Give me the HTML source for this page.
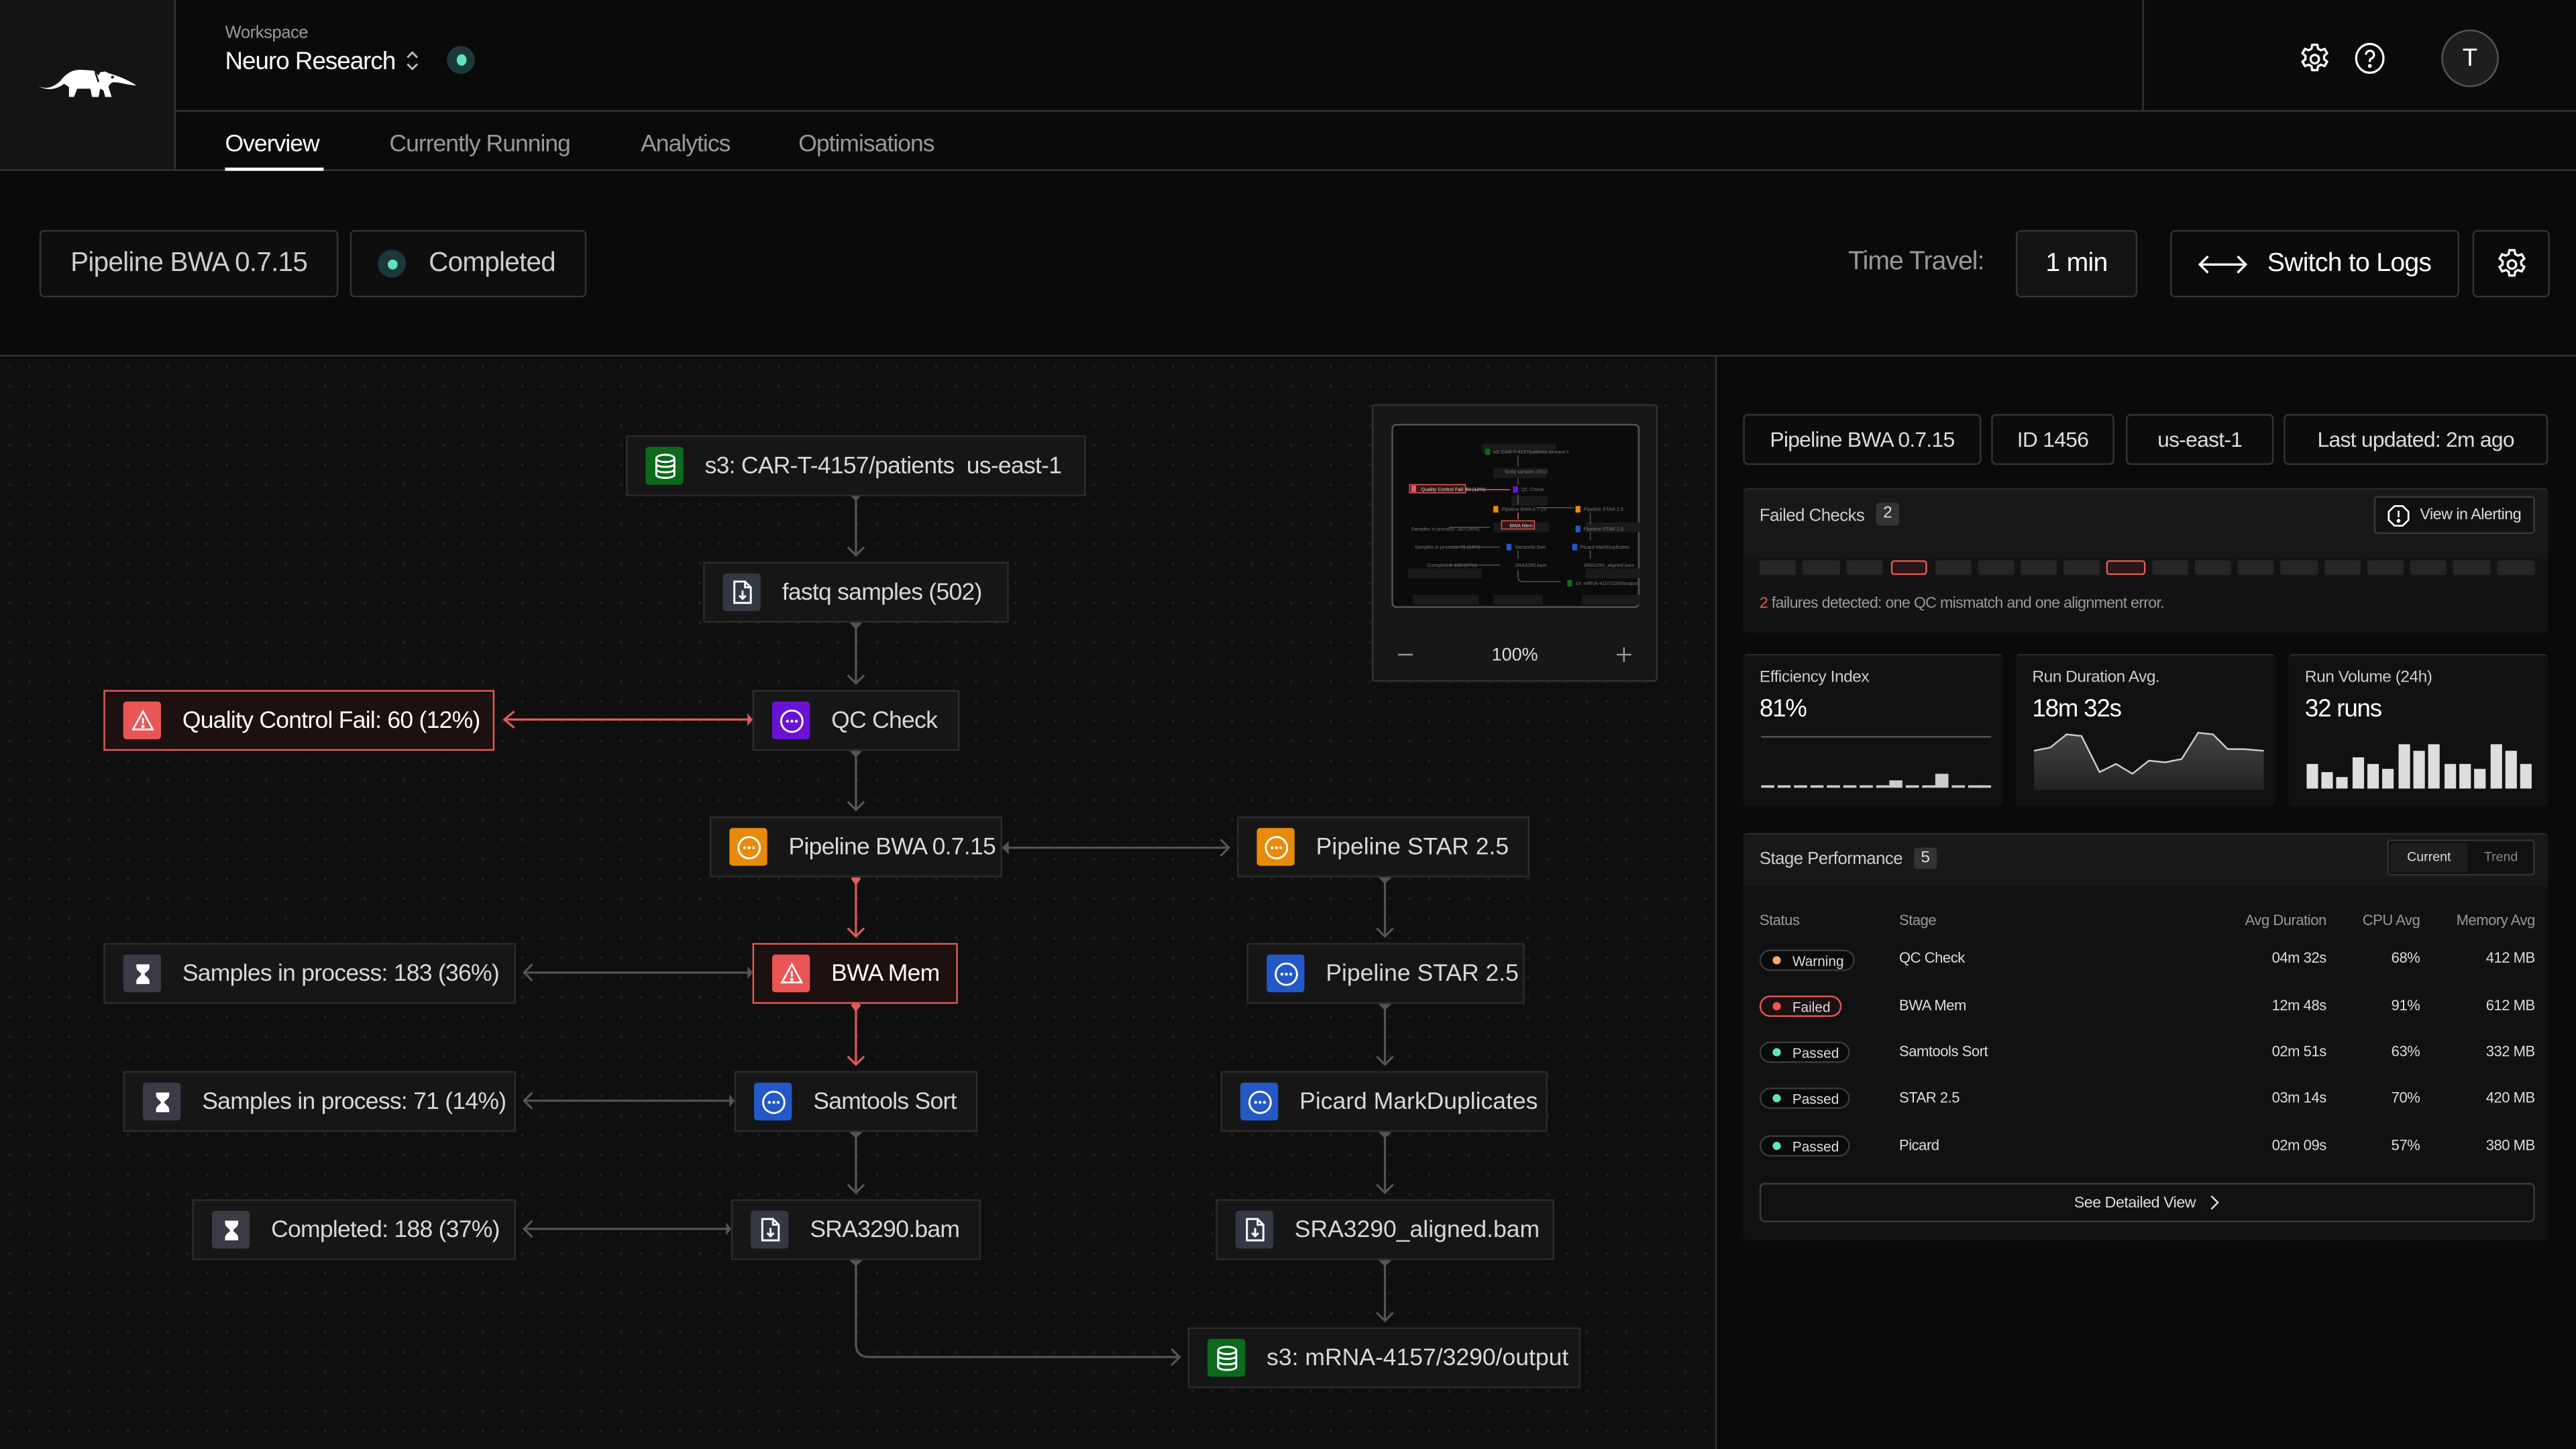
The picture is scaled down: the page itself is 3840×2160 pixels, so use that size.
<!DOCTYPE html>
<html><head><meta charset="utf-8">
<style>
*{box-sizing:border-box;margin:0;padding:0}
html,body{width:3840px;height:2160px;overflow:hidden;background:#0a0a0a}
#r{position:absolute;left:0;top:0;width:1568px;height:882px;transform:scale(2.44898);transform-origin:0 0;font-family:"Liberation Sans",Arial,sans-serif;color:#ddd;background:#0a0a0a}
.a{position:absolute}
.node{position:absolute;height:37px;background:#161616;border:1px solid #2c2c2c;display:flex;align-items:center;padding-left:11px;font-size:14.5px;color:#d8d8d8;white-space:nowrap;letter-spacing:-0.3px}
.node .ic{width:23px;height:23px;border-radius:2px;margin-right:13px;display:flex;align-items:center;justify-content:center;flex:none}
.red{border-color:#e05a5a;background:#1c1010;color:#fff}
.chip{position:absolute;border:1px solid #333;border-radius:3px;background:#111;display:flex;align-items:center;justify-content:center;font-size:13px;color:#ddd;letter-spacing:-0.3px}
.card{position:absolute;background:#111;border-radius:3px;border-top:1px solid #2a2a2a}
.t9{font-size:9px;color:#aaa}
.pill{position:absolute;left:1071px;height:13px;border:1px solid #3a3a3a;border-radius:7px;font-size:8.5px;color:#ddd;display:flex;align-items:center;padding:0 6px 0 7px;background:#0a0a0a}
.pill i{width:5px;height:5px;border-radius:50%;display:inline-block;margin-right:7px}
.row{position:absolute;font-size:9px;color:#ddd;letter-spacing:-0.2px}
</style></head><body><div id="r">

<!-- top header -->
<div class="a" style="left:0;top:0;width:107px;height:104px;background:#141414;border-right:1px solid #333"></div>
<svg class="a" style="left:23px;top:42px" width="60" height="17" viewBox="0 0 60 17"><path fill="#fff" d="M0,10 C5,13 10,11 14,7 C17,3 21,0 27,0.5 L34,1 C35,2 36,3 37,4 L38,2 L41,1.5 L43,2.5 C48,4 54,6 60,10 C56,10 50,8 46,8 L44,9 L43,11 L45,17 L41,17 L40,13 L38,12 L37,17 L33,17 L32,12 L24,12 L22,17 L19,17 L19,11 L16,9 C12,12 6,14 0,10 Z"/><path d="M35,2 L37,8" stroke="#141414" stroke-width="1"/><circle cx="45.5" cy="5" r="0.9" fill="#141414"/></svg>
<div class="a" style="left:107px;top:67px;width:1461px;height:1px;background:#333"></div>
<div class="a" style="left:1304px;top:0;width:1px;height:67px;background:#333"></div>
<div class="a" style="left:0;top:103px;width:1568px;height:1px;background:#333"></div>
<div class="a" style="left:137px;top:14px;font-size:10.5px;color:#999;letter-spacing:-0.2px">Workspace</div>
<div class="a" style="left:137px;top:29px;font-size:15px;color:#fff;letter-spacing:-0.4px">Neuro Research</div>
<svg class="a" style="left:246px;top:30px" width="10" height="14" viewBox="0 0 10 14"><path d="M2,5 L5,2 L8,5 M2,9 L5,12 L8,9" stroke="#bbb" fill="none" stroke-width="1.2"/></svg>
<div class="a" style="left:272px;top:28px;width:17px;height:17px;border-radius:50%;background:#1d3838"></div>
<div class="a" style="left:278px;top:33px;width:6px;height:7px;border-radius:50%;background:#5fe3c4"></div>
<div class="a" style="left:137px;top:80px;font-size:14.5px;color:#fff;letter-spacing:-0.4px">Overview</div>
<div class="a" style="left:137px;top:102px;width:60px;height:2px;background:#fff"></div>
<div class="a" style="left:237px;top:80px;font-size:14.5px;color:#999;letter-spacing:-0.4px">Currently Running</div>
<div class="a" style="left:390px;top:80px;font-size:14.5px;color:#999;letter-spacing:-0.4px">Analytics</div>
<div class="a" style="left:486px;top:80px;font-size:14.5px;color:#999;letter-spacing:-0.4px">Optimisations</div>
<svg class="a" style="left:1398px;top:25px" width="22" height="22" viewBox="0 0 24 24" fill="none" stroke="#fff" stroke-width="1.5"><path d="M10.3 2.5h3.4l.5 2.6 1.8 1 2.5-.9 1.7 2.9-2 1.7v2.2l2 1.7-1.7 2.9-2.5-.9-1.8 1-.5 2.6h-3.4l-.5-2.6-1.8-1-2.5.9-1.7-2.9 2-1.7v-2.2l-2-1.7 1.7-2.9 2.5.9 1.8-1z"/><circle cx="12" cy="12" r="2.8"/></svg>
<svg class="a" style="left:1432px;top:25px" width="21" height="21" viewBox="0 0 24 24" fill="none" stroke="#fff" stroke-width="1.5"><ellipse cx="12" cy="12" rx="9.5" ry="10"/><path d="M9.3 9.5a2.8 2.8 0 1 1 3.8 2.6c-.8.4-1.1.9-1.1 1.8v.6"/><circle cx="12" cy="17.3" r=".6" fill="#fff"/></svg>
<div class="a" style="left:1486px;top:18px;width:35px;height:35px;border-radius:50%;background:#1e1e1e;border:1.5px solid #555;display:flex;align-items:center;justify-content:center;font-size:15px;color:#fff">T</div>

<!-- toolbar -->
<div class="a" style="left:0;top:216px;width:1568px;height:1px;background:#333"></div>
<div class="chip" style="left:24px;top:140px;width:182px;height:41px;font-size:16.5px;color:#ccc;background:#0e0e0e">Pipeline BWA 0.7.15</div>
<div class="chip" style="left:213px;top:140px;width:144px;height:41px;font-size:16.5px;color:#ccc;background:#0e0e0e;justify-content:flex-start;padding-left:16px"><span style="width:17px;height:17px;border-radius:50%;background:#1d3838;display:inline-flex;align-items:center;justify-content:center;margin-right:14px"><span style="width:6px;height:6px;border-radius:50%;background:#5fe3c4"></span></span>Completed</div>
<div class="a" style="left:1125px;top:151px;font-size:16px;color:#999;letter-spacing:-0.4px">Time Travel:</div>
<div class="chip" style="left:1227px;top:140px;width:74px;height:41px;font-size:16px;color:#fff;background:#141414">1 min</div>
<div class="chip" style="left:1321px;top:140px;width:176px;height:41px;font-size:16px;color:#fff;background:#0a0a0a"><svg width="30" height="14" viewBox="0 0 30 14" style="margin-right:12px" fill="none" stroke="#fff" stroke-width="1.4"><path d="M1,7 H29 M6,2 L1,7 L6,12 M24,2 L29,7 L24,12"/></svg>Switch to Logs</div>
<div class="chip" style="left:1505px;top:140px;width:47px;height:41px;background:#0a0a0a"><svg width="22" height="22" viewBox="0 0 24 24" fill="none" stroke="#fff" stroke-width="1.5"><path d="M10.3 2.5h3.4l.5 2.6 1.8 1 2.5-.9 1.7 2.9-2 1.7v2.2l2 1.7-1.7 2.9-2.5-.9-1.8 1-.5 2.6h-3.4l-.5-2.6-1.8-1-2.5.9-1.7-2.9 2-1.7v-2.2l-2-1.7 1.7-2.9 2.5.9 1.8-1z"/><circle cx="12" cy="12" r="2.8"/></svg></div>

<!-- canvas -->
<div class="a" style="left:0;top:217px;width:1045px;height:665px;background-color:#0f0f0f;background-image:radial-gradient(circle,#1e1e1e 0.8px,transparent 1.1px);background-size:12px 12px;border-right:1px solid #333"></div>

<svg class="a" style="left:0;top:0" width="1045" height="882" fill="none" stroke-width="1.3">
<g stroke="#555">
<path d="M521,301 V338 M516,333 L521,338 L526,333"/>
<path d="M521,379 V416 M516,411 L521,416 L526,411"/>
<path d="M521,457 V493 M516,488 L521,493 L526,488"/>
<path d="M610,516 H748 M743,511 L748,516 L743,521"/>
<path d="M843,534 V570 M838,565 L843,570 L848,565"/>
<path d="M843,611 V648 M838,643 L843,648 L848,643"/>
<path d="M843,689 V726 M838,721 L843,726 L848,721"/>
<path d="M843,767 V804 M838,799 L843,804 L848,799"/>
<path d="M521,689 V726 M516,721 L521,726 L526,721"/>
<path d="M458,592 H319 M324,587 L319,592 L324,597"/>
<path d="M447,670 H319 M324,665 L319,670 L324,675"/>
<path d="M445,748 H319 M324,743 L319,748 L324,753"/>
<path d="M521,767 V818 Q521,826 529,826 H718 M713,821 L718,826 L713,831"/>
</g>
<g stroke="#e05a5a">
<path d="M458,438 H307 M313,433 L307,438 L313,443"/>
<path d="M521,534 V570 M516,565 L521,570 L526,565"/>
<path d="M521,611 V648 M516,643 L521,648 L526,643"/>
</g>
<g fill="#e05a5a"><path d="M521,531 l3,4 -3,4 -3,-4z"/><path d="M521,608 l3,4 -3,4 -3,-4z"/><path d="M458,438 l-3,-4 v8z"/></g>
<g fill="#555"><path d="M517,301 h8 l-4,4z"/><path d="M517,379 h8 l-4,4z"/><path d="M517,457 h8 l-4,4z"/><path d="M839,534 h8 l-4,4z"/><path d="M839,611 h8 l-4,4z"/><path d="M839,689 h8 l-4,4z"/><path d="M839,767 h8 l-4,4z"/><path d="M517,689 h8 l-4,4z"/><path d="M517,767 h8 l-4,4z"/><path d="M610,516 l4,-4 v8z"/><path d="M458,592 l-3,-4 v8z"/><path d="M447,670 l-3,-4 v8z"/><path d="M445,748 l-3,-4 v8z"/></g>
</svg>

<!-- icon defs via inline -->
<div class="node" style="left:381px;top:265px;width:280px"><span class="ic" style="background:#0b6a1c"><svg width="14" height="16" viewBox="0 0 14 16" fill="none" stroke="#fff" stroke-width="1.2"><ellipse cx="7" cy="3" rx="5.5" ry="2.2"/><path d="M1.5,3 V13 C1.5,15.5 12.5,15.5 12.5,13 V3 M1.5,6.3 C1.5,8.8 12.5,8.8 12.5,6.3 M1.5,9.6 C1.5,12.1 12.5,12.1 12.5,9.6"/></svg></span>s3: CAR-T-4157/patients&nbsp; us-east-1</div>
<div class="node" style="left:428px;top:342px;width:186px"><span class="ic" style="background:#333842"><svg width="12" height="15" viewBox="0 0 12 15" fill="none" stroke="#fff" stroke-width="1.2"><path d="M1,1 H7.5 L11,4.5 V14 H1Z M7.5,1 V4.5 H11 M6,6.5 V11.5 M4,9.5 L6,11.5 L8,9.5"/></svg></span>fastq samples (502)</div>
<div class="node" style="left:458px;top:420px;width:126px"><span class="ic" style="background:#6a12d4"><svg width="16" height="16" viewBox="0 0 16 16" fill="none" stroke="#fff" stroke-width="1.2"><circle cx="8" cy="8" r="6.5"/><g fill="#fff" stroke="none"><circle cx="5.3" cy="8" r=".9"/><circle cx="8" cy="8" r=".9"/><circle cx="10.7" cy="8" r=".9"/></g></svg></span>QC Check</div>
<div class="node red" style="left:63px;top:420px;width:238px"><span class="ic" style="background:#ea5656"><svg width="14" height="13" viewBox="0 0 14 13" fill="none" stroke="#fff" stroke-width="1.1"><path d="M7,1 L13,12 H1Z M7,5 V8.5"/><circle cx="7" cy="10.2" r=".5" fill="#fff"/></svg></span>Quality Control Fail: 60 (12%)</div>
<div class="node" style="left:432px;top:497px;width:178px"><span class="ic" style="background:#e88a0a"><svg width="16" height="16" viewBox="0 0 16 16" fill="none" stroke="#fff" stroke-width="1.2"><circle cx="8" cy="8" r="6.5"/><g fill="#fff" stroke="none"><circle cx="5.3" cy="8" r=".9"/><circle cx="8" cy="8" r=".9"/><circle cx="10.7" cy="8" r=".9"/></g></svg></span>Pipeline BWA 0.7.15</div>
<div class="node" style="left:753px;top:497px;width:178px;letter-spacing:0"><span class="ic" style="background:#e88a0a"><svg width="16" height="16" viewBox="0 0 16 16" fill="none" stroke="#fff" stroke-width="1.2"><circle cx="8" cy="8" r="6.5"/><g fill="#fff" stroke="none"><circle cx="5.3" cy="8" r=".9"/><circle cx="8" cy="8" r=".9"/><circle cx="10.7" cy="8" r=".9"/></g></svg></span>Pipeline STAR 2.5</div>
<div class="node" style="left:63px;top:574px;width:251px"><span class="ic" style="background:#3a3b44"><svg width="10" height="14" viewBox="0 0 10 14" fill="#fff"><path d="M1,1 H9 V2.5 C9,5 6,6 6,7 C6,8 9,9 9,11.5 V13 H1 V11.5 C1,9 4,8 4,7 C4,6 1,5 1,2.5Z"/></svg></span>Samples in process: 183 (36%)</div>
<div class="node red" style="left:458px;top:574px;width:125px"><span class="ic" style="background:#ea5656"><svg width="14" height="13" viewBox="0 0 14 13" fill="none" stroke="#fff" stroke-width="1.1"><path d="M7,1 L13,12 H1Z M7,5 V8.5"/><circle cx="7" cy="10.2" r=".5" fill="#fff"/></svg></span>BWA Mem</div>
<div class="node" style="left:759px;top:574px;width:169px;letter-spacing:0"><span class="ic" style="background:#2458c8"><svg width="16" height="16" viewBox="0 0 16 16" fill="none" stroke="#fff" stroke-width="1.2"><circle cx="8" cy="8" r="6.5"/><g fill="#fff" stroke="none"><circle cx="5.3" cy="8" r=".9"/><circle cx="8" cy="8" r=".9"/><circle cx="10.7" cy="8" r=".9"/></g></svg></span>Pipeline STAR 2.5</div>
<div class="node" style="left:75px;top:652px;width:239px"><span class="ic" style="background:#3a3b44"><svg width="10" height="14" viewBox="0 0 10 14" fill="#fff"><path d="M1,1 H9 V2.5 C9,5 6,6 6,7 C6,8 9,9 9,11.5 V13 H1 V11.5 C1,9 4,8 4,7 C4,6 1,5 1,2.5Z"/></svg></span>Samples in process: 71 (14%)</div>
<div class="node" style="left:447px;top:652px;width:148px"><span class="ic" style="background:#2458c8"><svg width="16" height="16" viewBox="0 0 16 16" fill="none" stroke="#fff" stroke-width="1.2"><circle cx="8" cy="8" r="6.5"/><g fill="#fff" stroke="none"><circle cx="5.3" cy="8" r=".9"/><circle cx="8" cy="8" r=".9"/><circle cx="10.7" cy="8" r=".9"/></g></svg></span>Samtools Sort</div>
<div class="node" style="left:743px;top:652px;width:199px;letter-spacing:0"><span class="ic" style="background:#2458c8"><svg width="16" height="16" viewBox="0 0 16 16" fill="none" stroke="#fff" stroke-width="1.2"><circle cx="8" cy="8" r="6.5"/><g fill="#fff" stroke="none"><circle cx="5.3" cy="8" r=".9"/><circle cx="8" cy="8" r=".9"/><circle cx="10.7" cy="8" r=".9"/></g></svg></span>Picard MarkDuplicates</div>
<div class="node" style="left:117px;top:730px;width:197px"><span class="ic" style="background:#3a3b44"><svg width="10" height="14" viewBox="0 0 10 14" fill="#fff"><path d="M1,1 H9 V2.5 C9,5 6,6 6,7 C6,8 9,9 9,11.5 V13 H1 V11.5 C1,9 4,8 4,7 C4,6 1,5 1,2.5Z"/></svg></span>Completed: 188 (37%)</div>
<div class="node" style="left:445px;top:730px;width:152px"><span class="ic" style="background:#333842"><svg width="12" height="15" viewBox="0 0 12 15" fill="none" stroke="#fff" stroke-width="1.2"><path d="M1,1 H7.5 L11,4.5 V14 H1Z M7.5,1 V4.5 H11 M6,6.5 V11.5 M4,9.5 L6,11.5 L8,9.5"/></svg></span>SRA3290.bam</div>
<div class="node" style="left:740px;top:730px;width:206px;letter-spacing:0"><span class="ic" style="background:#333842"><svg width="12" height="15" viewBox="0 0 12 15" fill="none" stroke="#fff" stroke-width="1.2"><path d="M1,1 H7.5 L11,4.5 V14 H1Z M7.5,1 V4.5 H11 M6,6.5 V11.5 M4,9.5 L6,11.5 L8,9.5"/></svg></span>SRA3290_aligned.bam</div>
<div class="node" style="left:723px;top:808px;width:239px;letter-spacing:0"><span class="ic" style="background:#0b6a1c"><svg width="14" height="16" viewBox="0 0 14 16" fill="none" stroke="#fff" stroke-width="1.2"><ellipse cx="7" cy="3" rx="5.5" ry="2.2"/><path d="M1.5,3 V13 C1.5,15.5 12.5,15.5 12.5,13 V3 M1.5,6.3 C1.5,8.8 12.5,8.8 12.5,6.3 M1.5,9.6 C1.5,12.1 12.5,12.1 12.5,9.6"/></svg></span>s3: mRNA-4157/3290/output</div>

<!-- minimap -->
<div class="a" style="left:835px;top:246px;width:174px;height:169px;background:#171717;border:1.5px solid #333;border-radius:2px"></div>
<div class="a" style="left:847px;top:258px;width:151px;height:112px;background:#0b0b0b;border:1.5px solid #555;border-radius:3px"></div>
<svg class="a" style="left:847px;top:258px" width="151" height="112" viewBox="0 0 151 112">
<g fill="#1a1a1a"><rect x="55" y="12" width="45" height="6"/><rect x="62" y="27" width="32" height="6"/><rect x="73" y="44" width="22" height="6"/><rect x="62" y="60" width="34" height="6"/><rect x="118" y="60" width="34" height="6"/><rect x="10" y="88" width="45" height="6"/><rect x="118" y="88" width="34" height="6"/><rect x="13" y="104" width="40" height="6"/><rect x="62" y="104" width="30" height="6"/><rect x="116" y="104" width="38" height="6"/><rect x="20" y="118" width="35" height="6"/></g>
<rect x="57" y="15" width="3" height="4" fill="#0b6a1c"/><rect x="11" y="37" width="34" height="5" fill="#3a1515" stroke="#e05a5a" stroke-width=".6"/><rect x="12" y="37.5" width="3" height="4" fill="#ea5656"/>
<rect x="74" y="38" width="3" height="4" fill="#6a12d4"/><rect x="62" y="50" width="3" height="4" fill="#e88a0a"/><rect x="112" y="50" width="3" height="4" fill="#e88a0a"/><rect x="67" y="59" width="20" height="5" fill="#3a1515" stroke="#e05a5a" stroke-width=".6"/><rect x="112" y="62" width="3" height="4" fill="#2458c8"/><rect x="70" y="73" width="3" height="4" fill="#2458c8"/><rect x="110" y="73" width="3" height="4" fill="#2458c8"/><rect x="107" y="95" width="3" height="4" fill="#0b6a1c"/>
<g fill="#777" font-size="3" font-family="Liberation Sans"><text x="62" y="18">s3: CAR-T-4157/patients us-east-1</text><text x="69" y="30">fastq samples (502)</text><text x="18" y="41" fill="#ddd">Quality Control Fail: 60 (12%)</text><text x="79" y="41">QC Check</text><text x="67" y="53">Pipeline BWA 0.7.15</text><text x="117" y="53">Pipeline STAR 2.5</text><text x="12" y="65">Samples in process: 183 (36%)</text><text x="72" y="63" fill="#ddd">BWA Mem</text><text x="117" y="65">Pipeline STAR 2.5</text><text x="14" y="76">Samples in process: 71 (14%)</text><text x="75" y="76">Samtools Sort</text><text x="115" y="76">Picard MarkDuplicates</text><text x="22" y="87">Completed: 188 (37%)</text><text x="75" y="87">SRA3290.bam</text><text x="117" y="87">SRA3290_aligned.bam</text><text x="112" y="98">s3: mRNA-4157/3290/output</text></g>
<g stroke="#555" stroke-width=".6" fill="none"><path d="M77,19 V26 M77,33 V37 M77,43 V49 M88,51 H111 M121,54 V61 M121,66 V71 M121,77 V82 M77,77 V82 M60,63 H35 M66,75 H35 M66,86 H35 M77,89 V93 Q77,96 80,96 H103"/></g>
<path d="M72,40 H45" stroke="#e05a5a" stroke-width=".7"/><path d="M77,54 V58" stroke="#e05a5a" stroke-width=".7"/>
</svg>
<div class="a" style="left:851px;top:398px;width:9px;height:1px;background:#999"></div>
<div class="a" style="left:908px;top:393px;font-size:11px;color:#ddd">100%</div>
<div class="a" style="left:984px;top:398px;width:9px;height:1px;background:#999"></div>
<div class="a" style="left:988px;top:394px;width:1px;height:9px;background:#999"></div>

<!-- right panel -->
<div class="chip" style="left:1061px;top:252px;width:145px;height:31px;background:#0c0c0c">Pipeline BWA 0.7.15</div>
<div class="chip" style="left:1212px;top:252px;width:75px;height:31px;background:#0c0c0c">ID 1456</div>
<div class="chip" style="left:1294px;top:252px;width:90px;height:31px;background:#0c0c0c">us-east-1</div>
<div class="chip" style="left:1390px;top:252px;width:161px;height:31px;background:#0c0c0c">Last updated: 2m ago</div>

<div class="card" style="left:1061px;top:297px;width:490px;height:88px;background:#131313"></div>
<div class="a" style="left:1061px;top:297px;width:490px;height:43px;background:#181818;border-top:1px solid #2a2a2a;border-radius:3px 3px 0 0"></div>
<div class="a" style="left:1071px;top:308px;font-size:10.5px;color:#ccc;letter-spacing:-0.2px">Failed Checks</div>
<div class="a" style="left:1142px;top:306px;width:14px;height:14px;background:#333;border-radius:2px;font-size:10px;color:#ddd;text-align:center;line-height:14px">2</div>
<div class="a" style="left:1445px;top:302px;width:98px;height:23px;border:1px solid #3a3a3a;border-radius:2px;background:#111;font-size:9.5px;color:#ddd;display:flex;align-items:center;padding-left:7px;letter-spacing:-0.2px"><svg width="14" height="14" viewBox="0 0 14 14" fill="none" stroke="#fff" stroke-width="1.1" style="margin-right:6px"><path d="M4.5,1 H9.5 L13,4.5 V9.5 L9.5,13 H4.5 L1,9.5 V4.5Z M7,3.8 V7.8"/><circle cx="7" cy="10" r=".6" fill="#fff"/></svg>View in Alerting</div>
<svg class="a" style="left:1071px;top:341px" width="474" height="10">
<g fill="#262626">
<rect x="0" y="0" width="22" height="9" rx="1.5"/><rect x="26" y="0" width="23" height="9" rx="1.5"/><rect x="53" y="0" width="22" height="9" rx="1.5"/><rect x="107" y="0" width="22" height="9" rx="1.5"/><rect x="133" y="0" width="22" height="9" rx="1.5"/><rect x="159" y="0" width="22" height="9" rx="1.5"/><rect x="185" y="0" width="22" height="9" rx="1.5"/><rect x="239" y="0" width="22" height="9" rx="1.5"/><rect x="265" y="0" width="22" height="9" rx="1.5"/><rect x="291" y="0" width="22" height="9" rx="1.5"/><rect x="317" y="0" width="23" height="9" rx="1.5"/><rect x="344" y="0" width="22" height="9" rx="1.5"/><rect x="370" y="0" width="22" height="9" rx="1.5"/><rect x="396" y="0" width="22" height="9" rx="1.5"/><rect x="422" y="0" width="23" height="9" rx="1.5"/><rect x="449" y="0" width="23" height="9" rx="1.5"/></g>
<rect x="80.5" y=".5" width="21" height="8" rx="1.5" fill="#2a1518" stroke="#e05a5a"/><rect x="211.5" y=".5" width="23" height="8" rx="1.5" fill="#2a1518" stroke="#e05a5a"/></svg>
<div class="a" style="left:1071px;top:362px;font-size:9.5px;color:#999;letter-spacing:-0.3px"><span style="color:#e05a5a">2</span> failures detected: one QC mismatch and one alignment error.</div>

<div class="card" style="left:1061px;top:398px;width:158px;height:93px"></div>
<div class="card" style="left:1227px;top:398px;width:158px;height:93px"></div>
<div class="card" style="left:1393px;top:398px;width:158px;height:93px"></div>
<div class="a" style="left:1071px;top:407px;font-size:10px;color:#ccc;letter-spacing:-0.2px">Efficiency Index</div>
<div class="a" style="left:1237px;top:407px;font-size:10px;color:#ccc;letter-spacing:-0.2px">Run Duration Avg.</div>
<div class="a" style="left:1403px;top:407px;font-size:10px;color:#ccc;letter-spacing:-0.2px">Run Volume (24h)</div>
<div class="a" style="left:1071px;top:423px;font-size:15px;color:#fff;letter-spacing:-0.5px">81%</div>
<div class="a" style="left:1237px;top:423px;font-size:15px;color:#fff;letter-spacing:-0.5px">18m 32s</div>
<div class="a" style="left:1403px;top:423px;font-size:15px;color:#fff;letter-spacing:-0.5px">32 runs</div>
<div class="a" style="left:1072px;top:448px;width:140px;height:1px;background:#555"></div>
<svg class="a" style="left:1072px;top:468px" width="140" height="12"><g fill="#ccc"><rect x="0" y="10" width="8" height="1.5"/><rect x="10" y="10" width="8" height="1.5"/><rect x="20" y="10" width="8" height="1.5"/><rect x="30" y="10" width="8" height="1.5"/><rect x="40" y="10" width="8" height="1.5"/><rect x="50" y="10" width="8" height="1.5"/><rect x="60" y="10" width="8" height="1.5"/><rect x="70" y="10" width="8" height="1.5"/><rect x="78" y="7" width="8" height="4.5"/><rect x="88" y="10" width="8" height="1.5"/><rect x="98" y="10" width="8" height="1.5"/><rect x="106" y="3" width="8" height="8.5"/><rect x="116" y="10" width="8" height="1.5"/><rect x="126" y="10" width="8" height="1.5"/><rect x="132" y="10" width="8" height="1.5"/></g></svg>
<svg class="a" style="left:1238px;top:444px" width="140" height="37" viewBox="0 0 140 37"><defs><linearGradient id="g" x1="0" y1="0" x2="0" y2="1"><stop offset="0" stop-color="#444"/><stop offset="1" stop-color="#222"/></linearGradient></defs><path d="M0,13 L10,11 L20,3 L29,4 L40,26 L50,21 L60,27 L70,19 L80,20 L90,18 L100,2 L109,3 L118,12 L128,12 L140,13 V37 H0Z" fill="url(#g)"/><path d="M0,13 L10,11 L20,3 L29,4 L40,26 L50,21 L60,27 L70,19 L80,20 L90,18 L100,2 L109,3 L118,12 L128,12 L140,13" stroke="#ccc" stroke-width="1" fill="none"/></svg>
<svg class="a" style="left:1404px;top:450px" width="140" height="30"><g fill="#ddd"><rect x="0" y="15" width="7" height="15"/><rect x="9" y="20" width="7" height="10"/><rect x="18" y="23" width="7" height="7"/><rect x="28" y="11" width="7" height="19"/><rect x="37" y="15" width="7" height="15"/><rect x="46" y="18" width="7" height="12"/><rect x="56" y="3" width="7" height="27"/><rect x="65" y="7" width="7" height="23"/><rect x="74" y="3" width="7" height="27"/><rect x="84" y="15" width="7" height="15"/><rect x="93" y="15" width="7" height="15"/><rect x="102" y="18" width="7" height="12"/><rect x="112" y="3" width="7" height="27"/><rect x="121" y="7" width="7" height="23"/><rect x="130" y="15" width="7" height="15"/></g></svg>

<div class="card" style="left:1061px;top:507px;width:490px;height:248px"></div>
<div class="a" style="left:1061px;top:507px;width:490px;height:33px;background:#181818;border-top:1px solid #2a2a2a;border-radius:3px 3px 0 0"></div>
<div class="a" style="left:1071px;top:517px;font-size:10.5px;color:#ccc;letter-spacing:-0.2px">Stage Performance</div>
<div class="a" style="left:1165px;top:516px;width:14px;height:13px;background:#333;border-radius:2px;font-size:10px;color:#ddd;text-align:center;line-height:13px">5</div>
<div class="a" style="left:1453px;top:511px;width:90px;height:22px;border:1px solid #333;border-radius:2px;background:#111"></div>
<div class="a" style="left:1455px;top:513px;width:47px;height:18px;background:#1e1e1e;border-radius:2px;font-size:8px;color:#ddd;text-align:center;line-height:18px">Current</div>
<div class="a" style="left:1512px;top:513px;font-size:8px;color:#888;line-height:18px">Trend</div>
<div class="row" style="left:1071px;top:555px;color:#999">Status</div>
<div class="row" style="left:1156px;top:555px;color:#999">Stage</div>
<div class="row" style="left:1340px;top:555px;width:76px;text-align:right;color:#999">Avg Duration</div>
<div class="row" style="left:1420px;top:555px;width:53px;text-align:right;color:#999">CPU Avg</div>
<div class="row" style="left:1480px;top:555px;width:63px;text-align:right;color:#999">Memory Avg</div>

<div class="pill" style="top:578px"><i style="background:#f5a76a"></i>Warning</div>
<div class="pill" style="top:606px;border-color:#e05a5a;background:#1c1010"><i style="background:#f05555"></i>Failed</div>
<div class="pill" style="top:634px"><i style="background:#5fe3c4"></i>Passed</div>
<div class="pill" style="top:662px"><i style="background:#5fe3c4"></i>Passed</div>
<div class="pill" style="top:691px"><i style="background:#5fe3c4"></i>Passed</div>

<div class="row" style="left:1156px;top:578px">QC Check</div><div class="row" style="left:1340px;top:578px;width:76px;text-align:right">04m 32s</div><div class="row" style="left:1420px;top:578px;width:53px;text-align:right">68%</div><div class="row" style="left:1480px;top:578px;width:63px;text-align:right">412 MB</div>
<div class="row" style="left:1156px;top:607px">BWA Mem</div><div class="row" style="left:1340px;top:607px;width:76px;text-align:right">12m 48s</div><div class="row" style="left:1420px;top:607px;width:53px;text-align:right">91%</div><div class="row" style="left:1480px;top:607px;width:63px;text-align:right">612 MB</div>
<div class="row" style="left:1156px;top:635px">Samtools Sort</div><div class="row" style="left:1340px;top:635px;width:76px;text-align:right">02m 51s</div><div class="row" style="left:1420px;top:635px;width:53px;text-align:right">63%</div><div class="row" style="left:1480px;top:635px;width:63px;text-align:right">332 MB</div>
<div class="row" style="left:1156px;top:663px">STAR 2.5</div><div class="row" style="left:1340px;top:663px;width:76px;text-align:right">03m 14s</div><div class="row" style="left:1420px;top:663px;width:53px;text-align:right">70%</div><div class="row" style="left:1480px;top:663px;width:63px;text-align:right">420 MB</div>
<div class="row" style="left:1156px;top:692px">Picard</div><div class="row" style="left:1340px;top:692px;width:76px;text-align:right">02m 09s</div><div class="row" style="left:1420px;top:692px;width:53px;text-align:right">57%</div><div class="row" style="left:1480px;top:692px;width:63px;text-align:right">380 MB</div>

<div class="a" style="left:1071px;top:720px;width:472px;height:24px;border:1px solid #3a3a3a;border-radius:3px;background:#111;font-size:9.5px;color:#ddd;display:flex;align-items:center;justify-content:center;letter-spacing:-0.2px">See Detailed View<svg width="8" height="10" viewBox="0 0 8 10" style="margin-left:7px" fill="none" stroke="#ddd" stroke-width="1"><path d="M2,1 L6,5 L2,9"/></svg></div>

</div></body></html>
